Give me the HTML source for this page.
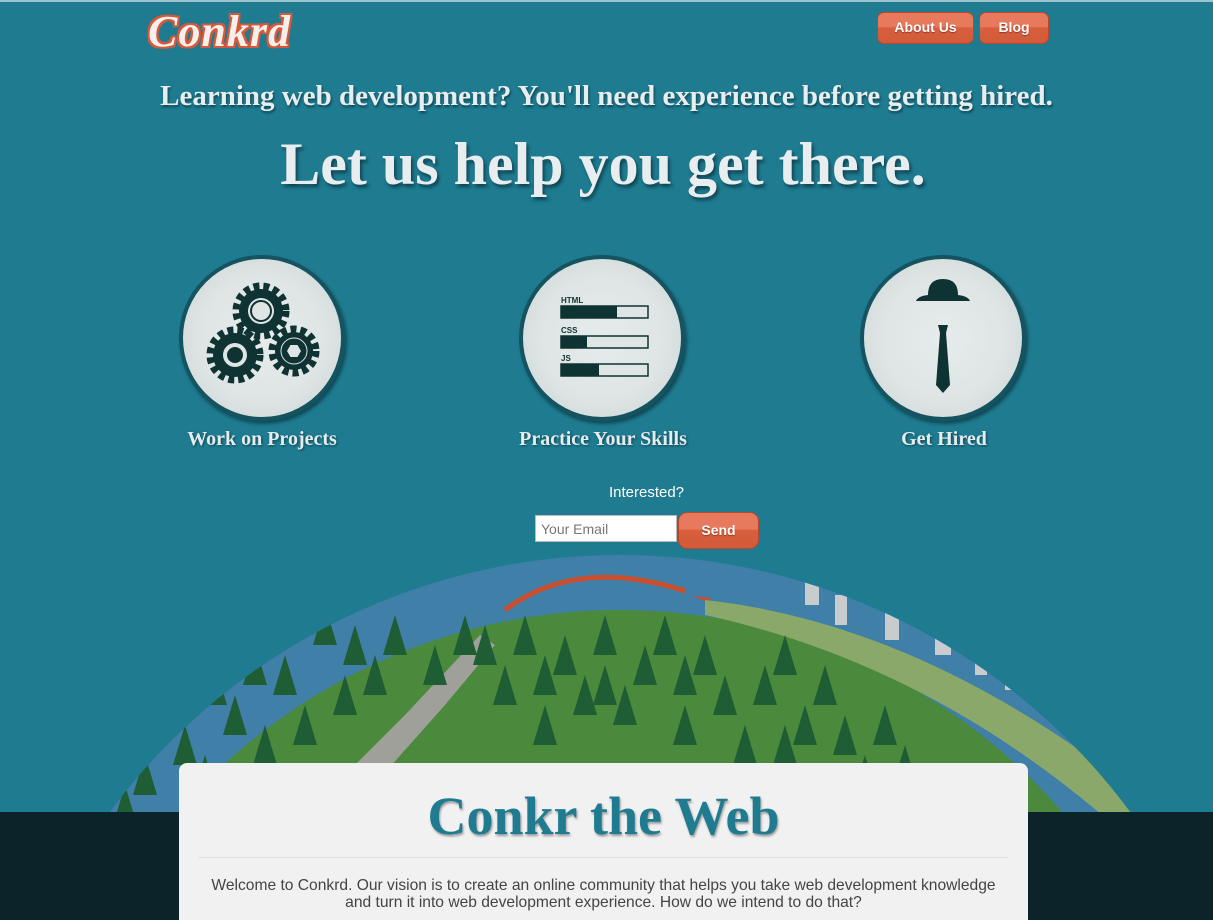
<!DOCTYPE html>
<html><head><meta charset="utf-8"><style>
*{margin:0;padding:0;box-sizing:border-box}
html,body{width:1213px;height:920px;overflow:hidden}
body{background:#1e7b90;font-family:"Liberation Sans",sans-serif}
#w{position:relative;width:1213px;height:920px;overflow:hidden;background:#1e7b90}
.top{position:absolute;left:0;top:0;width:1213px;height:2px;background:#9fc3cc}
.logo{position:absolute;left:148px;top:6px;font-family:"Liberation Serif",serif;font-style:italic;font-weight:bold;font-size:44px;color:#f4f0ec;letter-spacing:1px;
text-shadow:2px 0 #d9573a,-2px 0 #d9573a,0 2px #d9573a,0 -2px #d9573a,2px 2px #d9573a,-2px -2px #d9573a,2px -2px #d9573a,-2px 2px #d9573a}
.btn{position:absolute;height:32px;border-radius:7px;background:linear-gradient(#e7795c 0,#e7795c 45%,#d85f3d 50%,#d35a3a);border:1px solid #b8472c;color:#fff;font-weight:bold;font-size:14px;text-align:center;line-height:29px;text-shadow:0 1px 1px #8b3a26}
h2{position:absolute;left:0;width:1213px;text-align:center;top:80px;font-family:"Liberation Serif",serif;font-weight:bold;font-size:29px;color:#e8eef0;text-shadow:1px 2px 2px #0f4452}
h1{position:absolute;left:0;width:1206px;text-align:center;top:130px;font-family:"Liberation Serif",serif;font-weight:bold;font-size:60px;color:#e8eef0;text-shadow:2px 3px 3px #0f4452}
.c{position:absolute;top:255px;width:166px;height:166px;border-radius:50%;background:radial-gradient(circle,#e6ebeb 0,#dfe5e5 55%,#c9d2d3 100%);border:4px solid #14535f;box-shadow:2px 3px 3px #114a56}
.lbl{position:absolute;top:428px;width:300px;text-align:center;font-family:"Liberation Serif",serif;font-weight:bold;font-size:20px;color:#e4ecee;text-shadow:1px 1px 2px #0f4452}
.halo{position:absolute;left:0;top:470px;width:1240px;height:900px;border-radius:50%;background:radial-gradient(ellipse at 50% 60%,rgba(215,238,242,.95) 0,rgba(170,215,225,.75) 38%,rgba(30,123,144,0) 60%)}
.globe{position:absolute;left:-15px;top:555px;width:1270px;height:1270px;border-radius:50%;background:#3f7fa8;overflow:hidden}
.land{position:absolute;left:50px;top:55px;width:1170px;height:1170px;border-radius:50%;background:#4b8a3c}
.dark{position:absolute;left:0;top:812px;width:1213px;height:108px;background:#0b2329}
.panel{position:absolute;left:179px;top:763px;width:849px;height:170px;background:#f1f1f1;border-radius:8px}
</style></head><body><div id="w">
<div class="top"></div>
<div class="logo">Conkrd</div>
<div class="btn" style="left:877px;top:12px;width:97px">About Us</div>
<div class="btn" style="left:979px;top:12px;width:70px">Blog</div>
<h2>Learning web development? You'll need experience before getting hired.</h2>
<h1>Let us help you get there.</h1>

<div class="c" style="left:179px">
<svg width="158" height="158" viewBox="0 0 158 158"><g fill="#0f3332">
<circle cx="78" cy="52" r="22"/><circle cx="52" cy="96" r="22"/><circle cx="111" cy="92" r="19"/>
<g stroke="#0f3332" stroke-width="7" stroke-dasharray="6 4"><circle cx="78" cy="52" r="25" fill="none"/><circle cx="52" cy="96" r="25" fill="none"/><circle cx="111" cy="92" r="22" fill="none"/></g></g>
<circle cx="78" cy="52" r="13" fill="#dfe5e5"/><circle cx="78" cy="52" r="10" fill="none" stroke="#0f3332" stroke-width="2"/>
<circle cx="52" cy="96" r="12" fill="#dfe5e5"/><circle cx="52" cy="96" r="8" fill="#0f3332"/>
<circle cx="111" cy="92" r="13" fill="none" stroke="#dfe5e5" stroke-width="1"/><polygon points="104,92 107.5,86 114.5,86 118,92 114.5,98 107.5,98" fill="#dfe5e5"/></svg></div>
<div class="c" style="left:519px">
<svg width="158" height="158" viewBox="0 0 158 158" font-family="Liberation Sans" font-weight="bold" font-size="8" fill="#0f3332">
<text x="38" y="44">HTML</text><rect x="38" y="47" width="87" height="12" fill="#dfe5e5" stroke="#0f3332" stroke-width="1.5"/><rect x="38" y="47" width="56" height="12"/>
<text x="38" y="74">CSS</text><rect x="38" y="77" width="87" height="12" fill="#dfe5e5" stroke="#0f3332" stroke-width="1.5"/><rect x="38" y="77" width="26" height="12"/>
<text x="38" y="102">JS</text><rect x="38" y="105" width="87" height="12" fill="#dfe5e5" stroke="#0f3332" stroke-width="1.5"/><rect x="38" y="105" width="38" height="12"/></svg></div>
<div class="c" style="left:860px">
<svg width="158" height="158" viewBox="0 0 158 158" fill="#0f3332"><path d="M64 36 Q64 20 79 20 Q94 20 94 36 Q104 37 106 42 L52 42 Q54 37 64 36Z"/><path d="M74 66 L84 66 L82 74 L86 126 L79 134 L72 126 L76 74Z"/></svg></div>
<div class="lbl" style="left:112px">Work on Projects</div>
<div class="lbl" style="left:453px">Practice Your Skills</div>
<div class="lbl" style="left:794px">Get Hired</div>

<div class="halo"></div>
<div class="globe"><div class="land"></div>
<svg style="position:absolute;left:0;top:0" width="1270" height="400">
<path d="M520 55 Q600 -5 725 45" stroke="#c94e2d" stroke-width="5" fill="none"/>
<path d="M700 40 Q900 60 1100 200 L1190 300 L1250 300 L1250 0 L700 0Z" fill="#3f7fa8"/>
<path d="M720 45 Q950 70 1180 260 L1140 280 Q950 110 720 60Z" fill="#8aa86a"/>
<path d="M495 80 L420 160 L350 230 L380 240 L460 150 L510 90Z" fill="#a0a09a"/>
<g fill="#1f5d34">
<path d="M340 50l12 40h-24z M370 70l12 40h-24z M300 100l12 40h-24z M250 140l12 40h-24z M200 170l12 40h-24z M500 70l12 40h-24z M540 60l12 40h-24z M580 80l12 40h-24z M620 60l12 40h-24z M660 90l12 40h-24z M700 100l12 40h-24z M740 120l12 40h-24z M780 110l12 40h-24z M820 150l12 40h-24z M860 160l12 40h-24z M600 120l12 40h-24z M520 110l12 40h-24z M450 90l12 40h-24z M410 60l12 40h-24z M280 170l12 40h-24z M320 150l12 40h-24z M160 200l12 40h-24z M700 150l12 40h-24z M760 170l12 40h-24z M880 200l12 40h-24z M640 130l12 40h-24z
M230 110l12 40h-24z M270 90l12 40h-24z M390 100l12 40h-24z M560 100l12 40h-24z M680 60l12 40h-24z M720 80l12 40h-24z M800 80l12 40h-24z M840 110l12 40h-24z M900 150l12 40h-24z M480 60l12 40h-24z M620 110l12 40h-24z M220 200l12 40h-24z M140 230l12 40h-24z M360 120l12 40h-24z M560 150l12 40h-24z M800 170l12 40h-24z M920 190l12 40h-24z"/></g>
<g fill="#c9cccf"><rect x="820" y="20" width="14" height="30"/><rect x="850" y="40" width="12" height="30"/><rect x="900" y="50" width="14" height="35"/><rect x="950" y="60" width="16" height="40"/><rect x="990" y="90" width="12" height="30"/><rect x="1020" y="110" width="12" height="25"/></g>
</svg></div>
<div style="position:absolute;left:0;width:1293px;top:484px;text-align:center;color:#fff;font-size:15px">Interested?</div>
<div style="position:absolute;left:535px;top:515px;width:142px;height:27px;background:#fff;border:1px solid #bbb;color:#777;font-size:14px;padding:5px 5px">Your Email</div>
<div class="btn" style="left:678px;top:512px;width:81px;height:37px;line-height:34px;border-radius:9px">Send</div>
<div class="dark"></div>
<div class="panel">
<div style="text-align:center;margin-top:22px;font-family:'Liberation Serif',serif;font-weight:bold;font-size:54px;color:#1e7b90;text-shadow:1px 2px 2px #999">Conkr the Web</div>
<div style="margin:10px 20px 0;border-top:1px solid #ddd"></div>
<div style="text-align:center;margin-top:19px;font-size:15.6px;color:#444;line-height:17px">Welcome to Conkrd. Our vision is to create an online community that helps you take web development knowledge<br>and turn it into web development experience. How do we intend to do that?</div>
</div>
</div></body></html>
